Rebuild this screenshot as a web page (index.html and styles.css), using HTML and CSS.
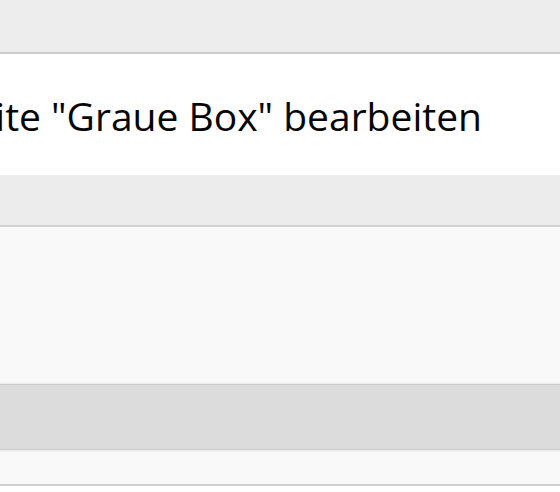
FILE: index.html
```html
<!DOCTYPE html>
<html lang="de">
<head>
<meta charset="utf-8">
<title>Seite bearbeiten</title>
<link rel="stylesheet" href="styles.css">
</head>
<body>
<div class="page">
  <div class="toolbar"></div>
  <header class="head">
    <h1 class="title">Seite "Graue Box" bearbeiten</h1>
  </header>
  <div class="tabs"></div>
  <div class="content"></div>
  <div class="bar"></div>
  <div class="strip"></div>
</div>
</body>
</html>
```
FILE: styles.css
```css
html, body {
  margin: 0;
  padding: 0;
  background: #ffffff;
  overflow: hidden;
}
.page {
  width: 560px;
  display: flex;
  flex-direction: column;
  font-family: "Open Sans", "Noto Sans", sans-serif;
}
.toolbar {
  height: 52px;
  background: #ededed;
  border-bottom: 2px solid #cccccc;
}
.head {
  height: 121px;
  background: #ffffff;
  display: flex;
  align-items: center;
  overflow: hidden;
  border-bottom: 1px solid #f0f0f0;
}
.title {
  margin: 2px 0 0 -48px;
  white-space: nowrap;
  font-weight: 400;
  font-size: 39px;
  line-height: 1;
  color: #050505;
}
.tabs {
  height: 49px;
  background: #ececec;
  border-bottom: 2px solid #d2d2d2;
}
.content {
  height: 156px;
  background: #f9f9f9;
  border-bottom: 1px solid #eeeeee;
}
.bar {
  height: 64px;
  background: #dcdcdc;
  border-top: 1px solid #cccccc;
  border-bottom: 1px solid #cccccc;
}
.strip {
  height: 32px;
  background: #f9f9f9;
  border-top: 2px solid #ededed;
  border-bottom: 2px solid #cfcfcf;
}
```
